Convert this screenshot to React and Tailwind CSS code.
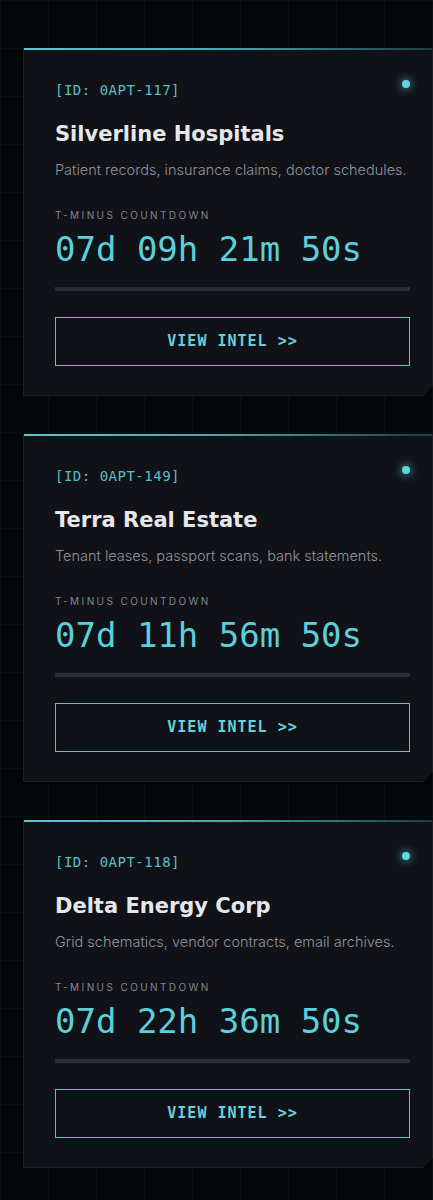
const targets = [
  {
    id: '0APT-117',
    name: 'Silverline Hospitals',
    desc: 'Patient records, insurance claims, doctor schedules.',
    countdown: '07d 09h 21m 50s',
  },
  {
    id: '0APT-149',
    name: 'Terra Real Estate',
    desc: 'Tenant leases, passport scans, bank statements.',
    countdown: '07d 11h 56m 50s',
  },
  {
    id: '0APT-118',
    name: 'Delta Energy Corp',
    desc: 'Grid schematics, vendor contracts, email archives.',
    countdown: '07d 22h 36m 50s',
  },
];

const mono = "font-['DejaVu_Sans_Mono',monospace]";

function TargetCard({ target }) {
  return (
    <div className="relative w-[410px] ml-[23px] bg-[#101217] border-x border-b border-white/[0.06] [clip-path:polygon(0_0,100%_0,100%_calc(100%-10px),calc(100%-10px)_100%,0_100%)]">
      <div className="h-[2px] bg-[linear-gradient(90deg,#5ec6d2_0%,#4aa3ae_50%,#1d3d45_100%)]" />
      <span className="absolute top-[32px] right-[22px] w-2 h-2 rounded-full bg-[#5fd6e2] shadow-[0_0_8px_2px_rgba(95,214,226,0.45)]" />
      <div className="pl-[31px] pr-[22px] pt-[30px] pb-[29px]">
        <p className={`${mono} text-[14px] leading-[20px] tracking-[0.5px] text-[#58bfca]`}>
          [ID: {target.id}]
        </p>
        <h2 className="mt-[20px] font-['DejaVu_Sans',sans-serif] font-bold text-[21px] leading-[28px] text-[#e6e7ea]">
          {target.name}
        </h2>
        <p className="mt-[11px] font-['Inter',sans-serif] font-light text-[14.5px] leading-[22px] text-[#8f959e]">
          {target.desc}
        </p>
        <p className="mt-[27px] font-['Inter',sans-serif] text-[10px] leading-[14px] tracking-[0.24em] text-[#80868f]">
          T-MINUS COUNTDOWN
        </p>
        <p className={`mt-[7px] ${mono} text-[34px] leading-[40px] text-[#5ccfdb]`}>
          {target.countdown}
        </p>
        <div className="mt-[18px] h-1 bg-[#2a2d33]" />
        <button
          className={`mt-[26px] w-full h-[49px] border border-[#58c4d1] ${mono} font-bold text-[15px] tracking-[1px] text-[#6acfda] flex items-center justify-center`}
        >
          VIEW INTEL &gt;&gt;
        </button>
      </div>
    </div>
  );
}

export default function App() {
  return (
    <div className="min-h-[1200px] bg-[#050607] bg-[linear-gradient(rgba(60,120,130,0.08)_1px,transparent_1px),linear-gradient(90deg,rgba(60,120,130,0.1)_1px,transparent_1px)] bg-[size:48px_48px] pt-[48px] pb-[33px] overflow-hidden">
      <div className="flex flex-col gap-[38px]">
        {targets.map((t) => (
          <TargetCard key={t.id} target={t} />
        ))}
      </div>
    </div>
  );
}
